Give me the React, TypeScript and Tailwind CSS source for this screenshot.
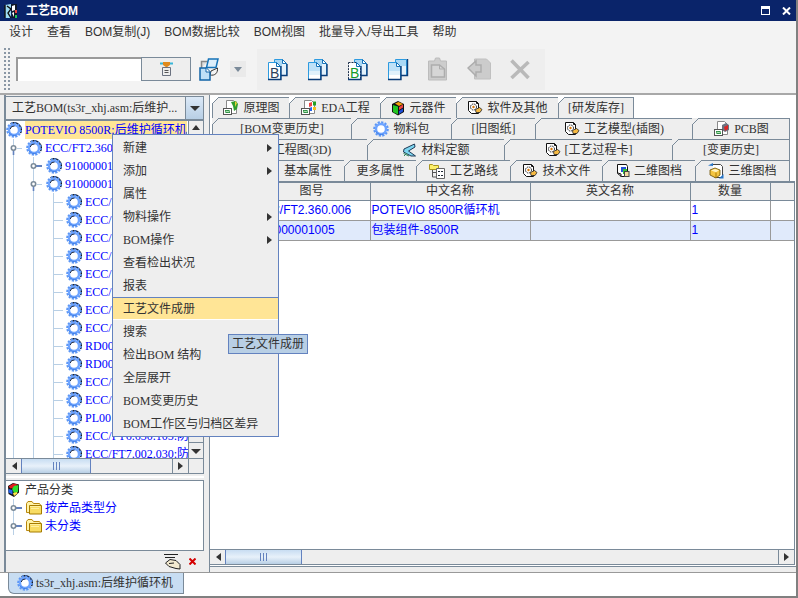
import React, { useState } from 'react';

type TreeNode = { text: string; guides: Guide[]; selected?: boolean };
type Guide = 'line' | 'open' | 'closed' | 'branch';

const menus = ['设计', '查看', 'BOM复制(J)', 'BOM数据比较', 'BOM视图', '批量导入/导出工具', '帮助'];

const leaf: Guide[] = ['line', 'line', 'branch'];

const nodes: TreeNode[] = [
  { text: 'POTEVIO 8500R:后维护循环机', guides: [], selected: true },
  { text: 'ECC/FT2.360', guides: ['open'] },
  { text: '91000001', guides: ['line', 'closed'] },
  { text: '91000001', guides: ['line', 'open'] },
  { text: 'ECC/', guides: leaf },
  { text: 'ECC/', guides: leaf },
  { text: 'ECC/', guides: leaf },
  { text: 'ECC/', guides: leaf },
  { text: 'ECC/', guides: leaf },
  { text: 'ECC/', guides: leaf },
  { text: 'ECC/', guides: leaf },
  { text: 'ECC/', guides: leaf },
  { text: 'RD00', guides: leaf },
  { text: 'RD00', guides: leaf },
  { text: 'ECC/', guides: leaf },
  { text: 'ECC/', guides: leaf },
  { text: 'PL00', guides: leaf },
  { text: 'ECC/FT6.630.105:防', guides: leaf },
  { text: 'ECC/FT7.002.030:防', guides: leaf },
];

const contextItems = [
  { text: '新建', sub: true },
  { text: '添加', sub: true },
  { text: '属性' },
  { text: '物料操作', sub: true },
  { text: 'BOM操作', sub: true },
  { text: '查看检出状况' },
  { text: '报表' },
  { text: '工艺文件成册' },
  { text: '搜索' },
  { text: '检出BOM 结构' },
  { text: '全层展开' },
  { text: 'BOM变更历史' },
  { text: 'BOM工作区与归档区差异' },
];

const Gear = ({ shaded }: { shaded?: boolean }) => (
  <svg width="16" height="16" viewBox="0 0 16 16" className="shrink-0">
    {shaded && <path d="M4.500 2A7 7 0 0 1 14.500 11" fill="none" stroke="#111827" strokeWidth="1.600" />}
    <circle cx="8" cy="8" r="6.700" fill="none" stroke="#5b96f5" strokeWidth="2.200" strokeDasharray="2.200 1.300" />
    <circle cx="8" cy="8" r="5" fill="#fff" stroke="#6ea4ff" strokeWidth="2.400" />
    <path d="M3 10.500A5.600 5.600 0 0 0 10.500 13" fill="none" stroke="#3f7fe6" strokeWidth="1" />
    {shaded && <path d="M4.200 7A4 4 0 0 1 8.500 4" fill="none" stroke="#0f172a" strokeWidth=".9" />}
  </svg>
);

const Cube = () => (
  <svg width="16" height="16" viewBox="0 0 16 16" className="shrink-0">
    <path d="M2 4l5-3 6 1.500v8L8 15l-5.500-3z" fill="#111" />
    <path d="M2.500 4.500l5-3 4 1-3 3-4 1z" fill="#e11d1d" />
    <path d="M8 4l4.500-1-.5 7-4 1-2-4z" fill="#2fe02f" />
    <path d="M2.500 7l4 1v4.500l-4-2z" fill="#2563eb" />
    <path d="M7 11l4-1 .5 1.500L8 14z" fill="#ffe94a" />
  </svg>
);

const ColorCube = () => (
  <svg width="14" height="16" viewBox="0 0 14 16" className="shrink-0">
    <path d="M1 4l6-3 6 3v8l-6 3.500L1 12z" fill="#111" />
    <path d="M4 3.500L7.500 2 12 4 8 6z" fill="#f59e0b" />
    <path d="M2 5l5 1.500v8l-5-2.500z" fill="#22c522" />
    <path d="M8 7l4-2.500v3L8 10z" fill="#ef4444" />
    <path d="M8 11l4-2.500v3L8 14z" fill="#1d4ed8" />
  </svg>
);

const Folder = () => (
  <svg width="16" height="14" viewBox="0 0 16 14" className="shrink-0">
    <path d="M.5 11.500v-9l1.500-2h4l1.500 2h6l1 1.500v8z" fill="#fff3a8" stroke="#b8860b" />
    <path d="M3.500 4.500h12v8.500H3.500z" fill="#f8dc62" stroke="#a67c00" />
    <path d="M4 5.500h10M5 7.500h8" stroke="#fff0a0" />
  </svg>
);

// sheet with a picture thumbnail, the mark behind differs by kind
const PictureSheet = ({ kind }: { kind: 'map' | 'eda' | 'pcb' }) => (
  <svg width="17" height="16" viewBox="0 0 17 16" className="shrink-0">
    <path d="M4.500.5h7l3 3v10h-10z" fill="#fff" stroke="#8a8a8a" />
    {kind === 'map' && (
      <>
        <path d="M9 2l5-1 2 3-1 5-3 2-1-5z" fill="#2f9e2f" />
        <path d="M13 1l2 2-2 4z" fill="#e9d43a" />
      </>
    )}
    {kind === 'eda' && (
      <>
        <path d="M9 3l3-1v4l-3 1z" fill="#ef4444" />
        <path d="M13 1.500h3v4h-3z" fill="#22a022" />
        <path d="M9 8l3-1v4H9z" fill="#2563eb" />
        <path d="M13 7h3v3h-3z" fill="#f4c020" />
      </>
    )}
    {kind === 'pcb' && (
      <>
        <path d="M9 4l4-2 3 2v5l-4 2-3-2z" fill="#6b7280" />
        <path d="M11 6l4-2v4l-3 2z" fill="#dc2626" />
      </>
    )}
    <rect x="1.500" y="8.500" width="8" height="6" fill="#fff" stroke="#555" />
    <rect x="3" y="10" width="5" height="3" fill="#2f8f46" />
    <path d="M3 12.500l2-1.500 1 1 2-1.500" stroke="#d9ffd9" strokeWidth=".8" fill="none" />
  </svg>
);

const GearSheet = () => (
  <svg width="16" height="16" viewBox="0 0 16 16" className="shrink-0">
    <path d="M1.500 1.500h8l2 2v10h-7l-3-3z" fill="#fff" stroke="#111" />
    <path d="M9.500 1.500v2h2" fill="none" stroke="#111" />
    <circle cx="6.500" cy="7" r="3" fill="#fff" stroke="#222" strokeDasharray="1.600 .8" />
    <circle cx="6.500" cy="7" r="1.200" fill="#d97706" />
    <path d="M8.500 9.500l4-2 2.500 2-2 3h-4z" fill="#f5b942" stroke="#222" strokeWidth=".8" />
  </svg>
);

const Wedge = () => (
  <svg width="15" height="15" viewBox="0 0 15 15" className="shrink-0">
    <path d="M12.500 1L2 6l-.5 3L9 13h4.500L6.500 8 13 4z" fill="#7ed6f0" stroke="#1f3b57" />
    <path d="M2 13l3-3M1.500 10.500L7 13" stroke="#2f855a" />
  </svg>
);

const RouteIcon = () => (
  <svg width="17" height="16" viewBox="0 0 17 16" className="shrink-0">
    <path d="M.5 1.500h3l1 1h5v4h-9z" fill="#fdf06a" stroke="#a89520" />
    <path d="M3.500 7v7H7M3.500 9.500H7" stroke="#555" fill="none" />
    <path d="M7.500 5.500h8v10h-8z" fill="#fff" stroke="#666" />
    <path d="M9 8.500h2M12 8.500h2M9 12.500h2M12 12.500h2" stroke="#1f2937" />
  </svg>
);

const Sheet2D = () => (
  <svg width="14" height="16" viewBox="0 0 14 16" className="shrink-0">
    <path d="M1.500 1.500h9l1 2v10h-6l-4-3z" fill="#fff" stroke="#111" />
    <path d="M2 10l3 1v3" fill="none" stroke="#111" />
    <rect x="5" y="4" width="5" height="5" fill="#2554d8" />
    <rect x="7" y="6" width="4" height="5" fill="#35c435" />
    <rect x="8.500" y="8.500" width="4.500" height="5" fill="#f2d9a0" stroke="#444" />
  </svg>
);

const Sheet3D = () => (
  <svg width="16" height="16" viewBox="0 0 16 16" className="shrink-0">
    <path d="M4.500 1.500h8l2 2v11h-8" fill="#fff" stroke="#444" />
    <path d="M0 2.500l5-2.500v3z" fill="#2776c9" />
    <path d="M15.500 11v4.500H11z" fill="#2776c9" />
    <path d="M2 7l5-2 5 2v5l-4 3-6-3z" fill="#f4c542" stroke="#6b4e00" strokeWidth=".8" />
    <path d="M3 7.500L7 6l4 1.200-3 2z" fill="#fff3c0" />
    <path d="M8 9.500v5" stroke="#a87900" />
  </svg>
);

const DocPair = ({ letter, square }: { letter?: 'B' | 'G'; square?: boolean }) => (
  <svg width="22" height="23" viewBox="0 0 22 23">
    <path d={square ? 'M8.500 1.500h11v16h-11z' : 'M7.500 1.500h8l4 4v12h-12z'} fill="#e3f2fc" stroke="#2d9be0" />
    <path d={square ? 'M9 2h10v6H9z' : 'M8 2h7v6H8z'} fill="#a9d8f5" />
    {!square && <path d="M15.500 1.500v4h4z" fill="#fff" stroke="#1673b8" />}
    <path d={square ? 'M14 17.500h6.500V1' : 'M14 17.500h6V6'} fill="none" stroke="#0b3c78" strokeWidth="1.400" />
    <path
      d="M1.500 4.500h8l4 4v13h-12z"
      fill="#fff"
      stroke={letter === 'G' ? '#1d2f4a' : '#2d9be0'}
      strokeDasharray={letter === 'G' ? '2 1' : undefined}
    />
    {!letter && <path d="M2 5h7v4h4v4H2z" fill="#bfe2f8" />}
    {!letter && <path d="M2 13h11v4H2z" fill="#e0f1fb" />}
    <path d="M9.500 4.500v4h4z" fill="#fff" stroke="#1673b8" />
    <path d="M1 21.500h13V8" fill="none" stroke="#0b3c78" strokeWidth="1.400" />
    {letter && (
      <text x="3" y="20" fontSize="14" fontFamily="Liberation Sans" fill={letter === 'B' ? '#2d3f5c' : '#159a2a'}>
        B
      </text>
    )}
  </svg>
);

const PasteIcon = () => (
  <svg width="22" height="24" viewBox="0 0 22 24">
    <path d="M1.500 4h6l1-3h4l1 3h6v19h-18z" fill="#cdcdcd" stroke="#bcbcbc" />
    <path d="M4.500 8h8l5 4v8h-13z" fill="#d6d6d6" stroke="#adadad" strokeWidth="1.500" />
    <path d="M12.500 8v4h5" stroke="#adadad" fill="none" />
  </svg>
);

const ReturnIcon = () => (
  <svg width="25" height="24" viewBox="0 0 25 24">
    <path d="M7.500 2h12l4 4v16h-16z" fill="#cccccc" stroke="#c0c0c0" />
    <path d="M1 11l8-7v4h5v7H9v4z" fill="#cccccc" stroke="#adadad" strokeWidth="1.500" />
  </svg>
);

const CrossIcon = () => (
  <svg width="20" height="21" viewBox="0 0 20 21">
    <path d="M1.500 1.500l17 17.500M18.500 3L1.500 19" stroke="#b9b9b9" strokeWidth="3.600" />
  </svg>
);

const SwapIcon = () => (
  <svg width="20" height="23" viewBox="0 0 20 23">
    <path d="M2.500 10V3.500h6" fill="#ddd" stroke="#888" strokeWidth="1.500" />
    <path d="M11 17c5 1 8-2 7.500-7L12 13z" fill="#f3f3f3" stroke="#333" />
    <path d="M9.500 1h9.500l-2 8.500H7.500z" fill="#dceefb" stroke="#1673b8" strokeWidth="1.500" />
    <path d="M1 10h6l4 4v8H1z" fill="#bfe0f7" stroke="#1264a8" strokeWidth="1.500" />
    <path d="M7 10v4h4" fill="#fff" stroke="#1264a8" />
  </svg>
);

const FilterIcon = () => (
  <svg width="13" height="14" viewBox="0 0 13 14">
    <path d="M0 1.500h13" stroke="#38b6d8" strokeWidth="2" />
    <path d="M3 0h7v3L6.500 5.500 3 3z" fill="#e08a1e" />
    <path d="M2.500 5.500h8v8h-8z" fill="#eee" stroke="#6b7280" />
    <path d="M4.500 8.500h4M4.500 10.500h4" stroke="#555" />
  </svg>
);

const PenIcon = () => (
  <svg width="17" height="16" viewBox="0 0 17 16">
    <path d="M0 .5h14M1 3.500h10" stroke="#222" />
    <path d="M1.500 9L6 5.500l6 1 4 4v4.500l-4-.5-7-2z" fill="#f3ead0" stroke="#222" />
    <path d="M5 9.500l5-.5" stroke="#222" />
  </svg>
);

const AppLogo = () => (
  <svg width="14" height="16" viewBox="0 0 14 16">
    <path d="M1 2l6-1v14H1z" fill="#9ddcf5" />
    <path d="M3 3l4 3-3 4 3 5M1 2v13" stroke="#111" fill="none" strokeWidth="1.400" />
    <path d="M7 1h6v14H8z" fill="#101828" />
    <path d="M8 3l3-1v5l-3 1zM8 10l2-1v5" fill="#fff" />
    <rect x="11" y="7" width="2" height="3" fill="#ef4444" />
    <rect x="11" y="12" width="2" height="3" fill="#22c55e" />
  </svg>
);

const GuideCell = ({ type }: { type: Guide }) => (
  <svg width="20" height="18" viewBox="0 0 20 18" className="shrink-0">
    {type !== 'open' && <path d="M7.500 0v18" stroke="#b8cfe5" />}
    {type === 'branch' && <path d="M8 9.500h9" stroke="#b8cfe5" />}
    {type === 'closed' && (
      <>
        <path d="M10 9h6" stroke="#6382bf" strokeWidth="2" />
        <circle cx="7.500" cy="9" r="2.200" fill="#fff" stroke="#7a8a99" strokeWidth="1.600" />
      </>
    )}
    {type === 'open' && (
      <>
        <path d="M11 9.500h5M7.500 13v5M7.500 0v6" stroke="#b8cfe5" />
        <path d="M7.500 11v5" stroke="#6382bf" strokeWidth="1.600" />
        <circle cx="7.500" cy="9" r="2.200" fill="#fff" stroke="#7a8a99" strokeWidth="1.600" />
      </>
    )}
  </svg>
);

const Arrow = ({ dir }: { dir: 'left' | 'right' | 'up' | 'down' }) => {
  const shapes = {
    left: 'M8 1L3 5l5 4z',
    right: 'M2 1l5 4-5 4z',
    up: 'M1 7l4-5 4 5z',
    down: 'M0 3h10L5 8z',
  };
  return (
    <svg width="10" height="10" viewBox="0 0 10 10">
      <path d={shapes[dir]} fill="#333" />
    </svg>
  );
};

const tabRows = [
  {
    cols: 'grid grid-cols-[77px_91px_76px_102px_76px]',
    tabs: [
      { text: '原理图', icon: <PictureSheet kind="map" /> },
      { text: 'EDA工程', icon: <PictureSheet kind="eda" /> },
      { text: '元器件', icon: <ColorCube /> },
      { text: '软件及其他', icon: <GearSheet /> },
      { text: '[研发库存]' },
    ],
  },
  {
    cols: 'grid grid-cols-[139fr_100fr_84fr_157fr_98fr]',
    tabs: [
      { text: '[BOM变更历史]' },
      { text: '物料包', icon: <Gear /> },
      { text: '[旧图纸]' },
      { text: '工艺模型(插图)', icon: <GearSheet /> },
      { text: 'PCB图', icon: <PictureSheet kind="pcb" /> },
    ],
  },
  {
    cols: 'grid grid-cols-[155fr_137fr_168fr_118fr]',
    tabs: [
      { text: '工艺工程图(3D)' },
      { text: '材料定额', icon: <Wedge /> },
      { text: '[工艺过程卡]', icon: <GearSheet /> },
      { text: '[变更历史]' },
    ],
  },
  {
    cols: 'grid grid-cols-[59fr_73fr_72fr_94fr_92fr_93fr_95fr]',
    tabs: [
      { text: '' },
      { text: '基本属性' },
      { text: '更多属性' },
      { text: '工艺路线', icon: <RouteIcon /> },
      { text: '技术文件', icon: <GearSheet /> },
      { text: '二维图档', icon: <Sheet2D /> },
      { text: '三维图档', icon: <Sheet3D /> },
    ],
  },
];

const Tab = ({ text, icon, firstRow }: { text: string; icon?: React.ReactNode; firstRow: boolean }) => (
  <button
    type="button"
    className="relative flex h-[21px] items-center justify-center gap-1 whitespace-nowrap border-l border-t border-[#7a8a99] bg-[#eee] last:border-r"
  >
    <svg width="7" height="7" viewBox="0 0 7 7" className="absolute -left-px -top-px">
      <path d="M0 0h7L0 7z" fill={firstRow ? '#fff' : '#eee'} />
      <path d="M0 7l7-7" stroke="#7a8a99" />
    </svg>
    {icon}
    {text}
  </button>
);

const ScrollBar = ({ thumb }: { thumb: string }) => (
  <div className="flex h-4 min-w-0 flex-1 border-y border-[#7a8a99] bg-[#eee]">
    <button type="button" aria-label="向左滚动" className="flex w-[15px] items-center justify-center">
      <Arrow dir="left" />
    </button>
    <div className={`${thumb} flex items-center justify-center gap-0.5 border-x border-[#6382bf] bg-linear-to-b from-[#c8ddf2] via-[#e8f1fa] to-[#b8cfe5]`}>
      <span className="h-2 w-px bg-[#6382bf]" />
      <span className="h-2 w-px bg-[#6382bf]" />
      <span className="h-2 w-px bg-[#6382bf]" />
    </div>
    <div className="flex-1" />
    <button type="button" aria-label="向右滚动" className="flex w-4 items-center justify-center border-l border-[#7a8a99]">
      <Arrow dir="right" />
    </button>
  </div>
);

const App: React.FC = () => {
  const [keyword, setKeyword] = useState<string>('');
  const [active, setActive] = useState<string>('工艺文件成册');

  return (
    <div className="relative flex h-screen flex-col overflow-hidden border-b-2 border-r-2 border-[#808080] bg-[#eee] font-['Liberation_Serif','Noto_Sans_CJK_SC',serif] text-[12px] leading-[18px] text-[#333]">
      <header className="flex h-[21px] shrink-0 items-center bg-[#0a246a] pl-1 pr-[5px] font-['Liberation_Sans','Noto_Sans_CJK_SC',sans-serif] text-white">
        <AppLogo />
        <h1 className="ml-2 flex-1 font-bold">工艺BOM</h1>
        <button type="button" aria-label="最大化" className="mr-3 h-[9px] w-[9px] border border-t-[3px] border-white" />
        <button type="button" aria-label="关闭">
          <svg width="9" height="8" viewBox="0 0 9 8">
            <path d="M1 .5l7 7M8 .5l-7 7" stroke="#fff" strokeWidth="2" />
          </svg>
        </button>
      </header>

      <nav className="flex h-[22px] shrink-0 items-center gap-[14px] bg-[#f3f3f3] pl-[9px] font-['Liberation_Sans','Noto_Sans_CJK_SC',sans-serif]">
        {menus.map((m) => (
          <button type="button" key={m} className="whitespace-nowrap">
            {m}
          </button>
        ))}
      </nav>

      <div className="flex h-[52px] shrink-0 items-center border-b-2 border-[#a8a8a8] bg-[#f3f3f3] pl-[3px] pt-0.5">
        <div className="mr-1 h-11 w-[9px] bg-[radial-gradient(#8a97a5_1px,transparent_1px)] bg-[size:4px_4px]" />
        <input
          aria-label="搜索关键字"
          value={keyword}
          onChange={(e) => setKeyword(e.target.value)}
          className="h-6 w-[125px] border-l-2 border-t-2 border-[#9a9a9a] bg-white px-1 outline-none"
        />
        <button type="button" aria-label="查找" className="flex h-6 w-[50px] items-center justify-center border border-[#7a8a99] bg-[#eee]">
          <FilterIcon />
        </button>
        <button type="button" aria-label="切换视图" className="ml-2">
          <SwapIcon />
        </button>
        <button type="button" aria-label="更多视图" className="ml-[11px] flex h-4 w-4 items-center justify-center bg-[#eaeaea]">
          <svg width="8" height="5" viewBox="0 0 8 5">
            <path d="M0 0h8L4 5z" fill="#7a8a99" />
          </svg>
        </button>
        <div className="ml-[11px] flex h-[41px] w-[288px] items-center gap-[18px] bg-[#eee] pl-[10px]">
          <button type="button" aria-label="复制BOM"><DocPair letter="B" /></button>
          <button type="button" aria-label="复制"><DocPair /></button>
          <button type="button" aria-label="复制结构"><DocPair letter="G" /></button>
          <button type="button" aria-label="复制文档"><DocPair square /></button>
          <button type="button" aria-label="粘贴" disabled><PasteIcon /></button>
          <button type="button" aria-label="撤回" disabled><ReturnIcon /></button>
          <button type="button" aria-label="删除" disabled><CrossIcon /></button>
        </div>
      </div>

      <main className="flex min-h-0 flex-1">
        <section className="flex w-[204px] shrink-0 flex-col pl-1">
          <div className="flex min-h-0 flex-1 flex-col border-l-2 border-[#7a8a99] pt-px">
            <div className="flex h-6 shrink-0 border border-l-0 border-[#7a8a99]">
              <select
                aria-label="BOM视图"
                className="min-w-0 flex-1 appearance-none bg-[#eee] pl-[6px] outline-none"
                defaultValue="ts3r"
              >
                <option value="ts3r">工艺BOM(ts3r_xhj.asm:后维护...</option>
              </select>
              <span className="flex w-[18px] items-center justify-center border-l border-[#7a8a99] bg-linear-to-b from-[#dce9f7] to-[#b8cfe5]">
                <Arrow dir="down" />
              </span>
            </div>

            <div className="flex min-h-0 flex-1 flex-col border-r border-t border-[#7a8a99]">
              <div className="flex min-h-0 flex-1">
                <ul className="min-w-0 flex-1 overflow-hidden bg-white text-[#0000ff]">
                  {nodes.map((n, i) => (
                    <li key={i} className="flex h-[18px] items-center whitespace-nowrap">
                      {n.guides.map((g, j) => (
                        <GuideCell key={j} type={g} />
                      ))}
                      <Gear shaded />
                      <button
                        type="button"
                        className={n.selected ? 'ml-[3px] bg-[#ffe596]' : 'ml-[3px]'}
                      >
                        {n.text}
                      </button>
                    </li>
                  ))}
                </ul>
                <div className="flex w-[15px] flex-col justify-between border-l border-[#7a8a99]">
                  <button type="button" aria-label="向上滚动" className="flex h-[15px] items-center justify-center border-b border-[#7a8a99]">
                    <Arrow dir="up" />
                  </button>
                  <button type="button" aria-label="向下滚动" className="flex h-4 items-center justify-center border-t border-[#7a8a99]">
                    <Arrow dir="down" />
                  </button>
                </div>
              </div>
              <div className="flex h-4 shrink-0">
                <ScrollBar thumb="w-[70px]" />
                <div className="w-[15px] border-y border-l border-[#7a8a99]" />
              </div>
            </div>

            <div className="my-0.5 h-0.5 shrink-0 bg-white" />

            <ul className="h-[71px] shrink-0 border border-l-0 border-[#7a8a99] bg-white text-[#0000ff]">
              <li className="flex h-[18px] items-center gap-[3px] text-[#333]">
                <Cube />
                产品分类
              </li>
              {['按产品类型分', '未分类'].map((t) => (
                <li key={t} className="flex h-[18px] items-center">
                  <GuideCell type="closed" />
                  <Folder />
                  <button type="button" className="ml-[3px]">{t}</button>
                </li>
              ))}
            </ul>

            <div className="flex h-[21px] shrink-0 items-center justify-end gap-2 pr-2">
              <button type="button" aria-label="编辑"><PenIcon /></button>
              <button type="button" aria-label="移除">
                <svg width="7" height="7" viewBox="0 0 7 7">
                  <path d="M.5.5l6 6M6.500.5l-6 6" stroke="#d40000" strokeWidth="2" />
                </svg>
              </button>
            </div>
          </div>
        </section>

        <section className="ml-[5px] flex min-w-0 flex-1 flex-col border-l border-[#7a8a99] bg-white">
          <div className="shrink-0 pl-0.5 pr-[6px] pt-0.5">
            {tabRows.map((row, i) => (
              <div key={i} className={row.cols}>
                {row.tabs.map((t) => (
                  <Tab key={t.text} firstRow={i === 0} {...t} />
                ))}
              </div>
            ))}
          </div>

          <div className="mr-px flex min-h-0 flex-1 flex-col border-r border-t-2 border-[#7a8a99]">
            <div className="min-h-0 flex-1 overflow-hidden">
              <table className="w-full table-fixed border-collapse font-['Liberation_Sans','Noto_Sans_CJK_SC',sans-serif] leading-4">
                <colgroup>
                  <col className="w-[43px]" />
                  <col className="w-[117px]" />
                  <col className="w-[160px]" />
                  <col className="w-[160px]" />
                  <col className="w-[80px]" />
                  <col />
                </colgroup>
                <thead>
                  <tr className="h-[17px] bg-[#eee]">
                    {['', '图号', '中文名称', '英文名称', '数量', ''].map((h, i) => (
                      <th key={i} className="border-b border-r border-[#7a8a99] p-0 font-normal last:border-r-0">
                        {h}
                      </th>
                    ))}
                  </tr>
                </thead>
                <tbody className="text-[#0000ff]">
                  {[
                    ['', 'ECC/FT2.360.006', 'POTEVIO 8500R循环机', '', '1', ''],
                    ['', '910000001005', '包装组件-8500R', '', '1', ''],
                  ].map((r) => (
                    <tr key={r[1]} className="h-5 even:bg-[#e0eafb]">
                      {r.map((c, j) => (
                        <td key={j} className="whitespace-nowrap border-b border-r border-[#999] px-px py-0 last:border-r-0">
                          {c}
                        </td>
                      ))}
                    </tr>
                  ))}
                </tbody>
              </table>
            </div>
            <div className="flex h-4 shrink-0">
              <ScrollBar thumb="w-[77px]" />
            </div>
          </div>
          <div className="mt-px h-[6px] shrink-0 border-t border-[#7a8a99] bg-[#eee]" />
        </section>
      </main>

      <footer className="flex h-6 shrink-0 items-start border-t border-[#999] bg-white pl-2">
        <button
          type="button"
          className="flex h-[21px] w-[176px] items-center gap-[3px] whitespace-nowrap rounded-bl-md border border-t-0 border-[#7a8a99] bg-[#c8ddf2] pl-2"
        >
          <Gear shaded />
          ts3r_xhj.asm:后维护循环机
        </button>
      </footer>

      <div role="menu" className="absolute left-[112px] top-[134px] w-[167px] border border-[#6382bf] bg-[#eee] py-px">
        {contextItems.map((item) => (
          <button
            type="button"
            role="menuitem"
            key={item.text}
            onMouseEnter={() => setActive(item.text)}
            className={
              active === item.text
                ? 'flex h-[23px] w-full items-center justify-between border-b border-t border-b-white border-t-[#6382bf] bg-[#ffe596] pl-[10px] pr-[3px]'
                : 'flex h-[23px] w-full items-center justify-between pl-[10px] pr-[3px]'
            }
          >
            {item.text}
            {item.sub && <Arrow dir="right" />}
          </button>
        ))}
      </div>

      <div role="tooltip" className="absolute left-[228px] top-[334px] whitespace-nowrap border border-[#6382bf] bg-[#b8cfe5] px-[3px]">
        工艺文件成册
      </div>
    </div>
  );
};

export default App;
